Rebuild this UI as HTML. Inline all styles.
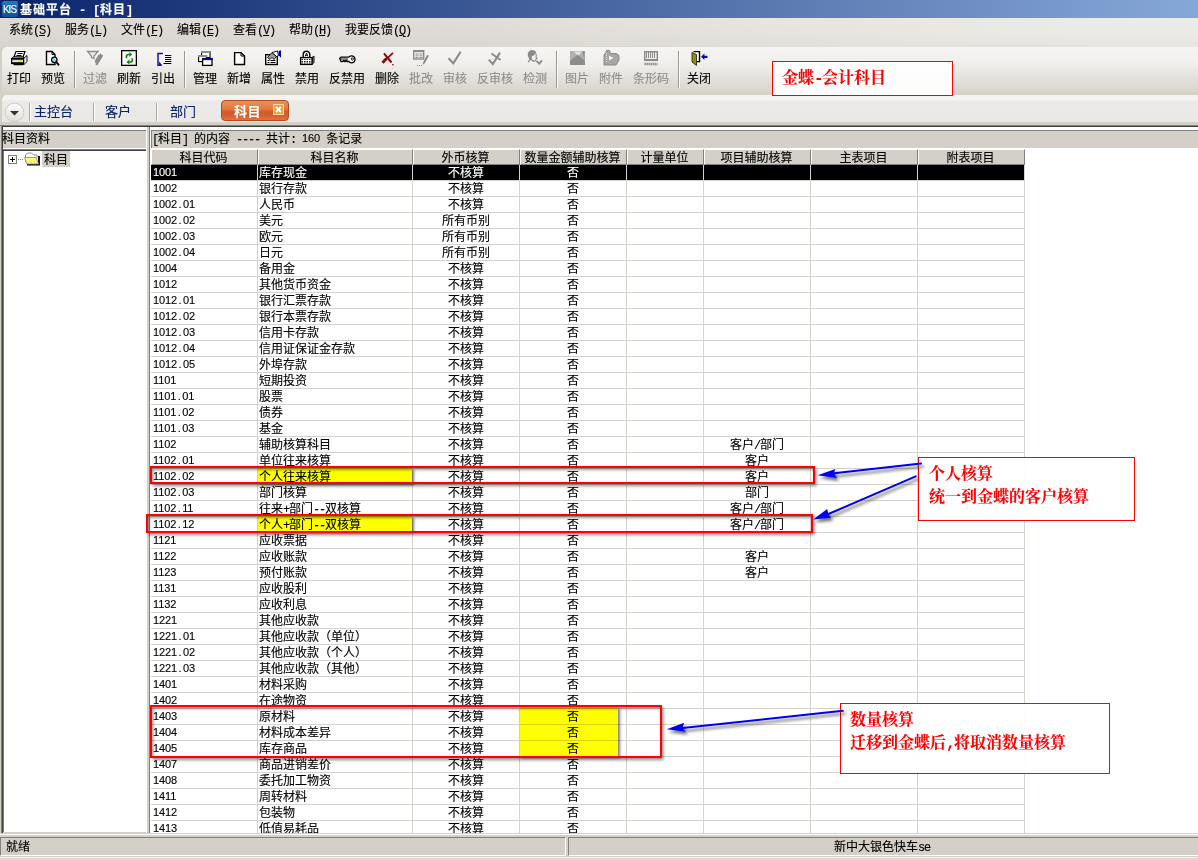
<!DOCTYPE html>
<html lang="zh-CN">
<head>
<meta charset="utf-8">
<title>基础平台 - [科目]</title>
<style>
*{box-sizing:border-box;margin:0;padding:0}
html,body{width:1198px;height:860px;overflow:hidden;background:#d4d0c8}
body{will-change:transform;-webkit-text-stroke:0.12px}
body{position:relative;font-family:"Liberation Sans","Noto Sans CJK SC",sans-serif;font-size:12px;line-height:16px;color:#000}
.l{font-family:"Liberation Mono","Noto Sans CJK SC",monospace;letter-spacing:-1.2px}
.n{font-family:"Liberation Sans",sans-serif;font-size:11px;letter-spacing:-0.120px;position:relative;top:-1px}
.n i{display:inline-block;width:6px;text-align:center;font-style:normal;letter-spacing:0}
.lb{font-family:"Liberation Mono","Noto Sans CJK SC",monospace;letter-spacing:-0.2px}
.abs{position:absolute}
/* title */
#title{position:absolute;left:0;top:0;width:1198px;height:18px;background:linear-gradient(90deg,#0a246a 0%,#86a8d8 100%)}
#title .kis{position:absolute;left:2px;top:1px;width:16px;height:16px;border-radius:2px;background:linear-gradient(180deg,#2278be,#0e5298);color:#fff;font-size:10px;line-height:17px;text-align:center;letter-spacing:-1px;text-indent:-1px;font-family:"Liberation Sans",sans-serif}
#title .t{position:absolute;left:20px;top:2px;color:#fff;font-weight:bold;font-size:12px;line-height:16px;letter-spacing:1px;white-space:pre}
/* menu */
#menu{position:absolute;left:0;top:18px;width:1198px;height:29px;background:linear-gradient(180deg,rgba(255,255,255,.06) 0%,rgba(255,255,255,0) 50%,rgba(0,0,0,.025) 100%),linear-gradient(90deg,#dcd9d2 0%,#dedbd5 38%,#e6e4de 65%,#eceae6 92%)}
#menu span.m{position:absolute;top:4px;white-space:pre;line-height:16px}
#menu u{text-decoration:underline}
/* toolbar */
#tb{position:absolute;left:2px;top:47px;width:1196px;height:47px;border-radius:5px 0 0 0;background:linear-gradient(180deg,#f6f5f3 0%,#f0efec 35%,#e2e0da 70%,#d5d2c9 100%)}
.b{position:absolute;top:0;height:47px;text-align:center}
.b svg{position:absolute;top:3px;left:50%;margin-left:-7px;width:17px;height:16px;overflow:visible}
.b span{position:absolute;left:1px;right:-1px;top:24px;line-height:16px;white-space:nowrap}
.b.d span{color:#8e8e8e}
.sep{position:absolute;top:4px;width:2px;height:37px;border-left:1px solid #9a9890;border-right:1px solid #fdfdfc}
/* tab bar */
#tabs{position:absolute;left:2px;top:95px;width:1196px;height:27px;border-radius:5px 0 0 0;background:linear-gradient(180deg,#f5f4f2 0,#f4f3f1 5px,#ebeae8 6px,#e9e8e5 100%)}
#tabs .tl{position:absolute;top:9px;color:#0a246a;font-size:13px;line-height:16px;white-space:nowrap}
#tabs .ts{position:absolute;top:8px;width:2px;height:18px;border-left:1px solid #aaa79e;border-right:1px solid #fff}
/* panes */
.hdr{position:absolute;height:18px;background:#d4d0c8;border-top:1px solid #808080;line-height:16px;padding-top:0px;white-space:pre}
/* table */
#grid{position:absolute;left:151px;top:149px;width:874px;height:684px;overflow:hidden}
.h{display:flex;height:16px;background:#d4d0c8}
.h div{height:16px;border-right:1px solid #808080;border-bottom:1px solid #808080;border-left:1px solid #fff;border-top:1px solid #fff;text-align:center;line-height:17px;padding-right:2px;white-space:nowrap;overflow:hidden}
.r{display:flex;height:16px}
.r.sel{background:#000;color:#fff}
.c{height:16px;border-right:1px solid #d5d2cb;border-bottom:1px solid #d5d2cb;line-height:17px;white-space:nowrap;overflow:hidden;text-align:center}

.c1{width:107px;text-align:left;padding-left:2px}
.c2{width:155px;text-align:left;padding-left:1px}
.c3,.c4,.c6,.c7,.c8{width:107px}
.c5{width:77px}
/* annotations */
.note{position:absolute;background:rgba(255,255,255,.93);border:1px solid #f00;color:#f00;font-weight:bold;font-size:16px;line-height:22.500px;font-family:"Liberation Serif","Noto Serif CJK SC",serif;white-space:nowrap}
.nl{font-family:"Liberation Mono",monospace;letter-spacing:-1.600px}
.rr{position:absolute;border:2px solid #ff0000;box-shadow:1.500px 2px 3px rgba(0,0,0,.45),inset 1.500px 2px 3px rgba(0,0,0,.4)}
.yl{position:absolute;background:#ffff00;box-shadow:1.500px 2px 2.500px rgba(0,0,0,.5);mix-blend-mode:multiply}
/* status */
#status{position:absolute;left:0;top:833px;width:1198px;height:27px;background:#d4d0c8}
</style>
</head>
<body>
<div id="title"><div class="kis">KIS</div><div class="t">基础平台<span class="lb"> - [</span>科目<span class="lb">]</span></div></div>

<div id="menu">
<span class="m" style="left:9px">系统<span class="l">(<u>S</u>)</span></span>
<span class="m" style="left:65px">服务<span class="l">(<u>L</u>)</span></span>
<span class="m" style="left:121px">文件<span class="l">(<u>F</u>)</span></span>
<span class="m" style="left:177px">编辑<span class="l">(<u>E</u>)</span></span>
<span class="m" style="left:233px">查看<span class="l">(<u>V</u>)</span></span>
<span class="m" style="left:289px">帮助<span class="l">(<u>H</u>)</span></span>
<span class="m" style="left:345px">我要反馈<span class="l">(<u>Q</u>)</span></span>
</div>

<div id="tb">
<div class="b" style="left:-1px;width:34px"><svg viewBox="0 0 17 16"><path d="M5 1.500h9l-2 5.500h-9z" fill="#fff" stroke="#000" stroke-width="1.200"/><path d="M6.500 3.500h5M5.500 5.500h5" stroke="#000"/><path d="M12.500 8.500l3.500-3v6l-3.500 3.500z" fill="#e4e4e4" stroke="#000" stroke-width="0.900"/><path d="M0.600 8.500l2-1.500h10l-0.100 1.500" fill="#fff" stroke="#000"/><rect x="0.600" y="8.500" width="12" height="5" fill="#fff" stroke="#000" stroke-width="1.200"/><path d="M1 9.700h11M1 12.400h11" stroke="#000" stroke-width="0.900"/><rect x="7" y="10.300" width="3.300" height="1.700" fill="#f0e000"/><path d="M2.500 14.600h9.500" stroke="#000" stroke-width="1.300"/></svg><span>打印</span></div>
<div class="b" style="left:33px;width:34px"><svg viewBox="0 0 17 16"><path d="M1.500 1.500h5.500l3 3v10h-8.500z" fill="#fff" stroke="#000" stroke-width="1.400"/><path d="M7 1.500v3h3" fill="none" stroke="#000"/><circle cx="9.300" cy="9.800" r="2.700" fill="#d8f4f8" stroke="#000" stroke-width="1.300"/><circle cx="9" cy="9.300" r="1" fill="#20d8f0"/><circle cx="10.200" cy="10.600" r="0.800" fill="#20d8f0"/><path d="M11.300 12l2.700 3.400" stroke="#000" stroke-width="1.900"/></svg><span>预览</span></div>
<div class="sep" style="left:72px"></div>
<div class="b d" style="left:75px;width:34px"><svg viewBox="0 0 17 16"><path d="M0.500 1.500h10.500l-4 4.500v2.500l-2.500-1v-1.500z" fill="#f0efec" stroke="#8a8a8a" stroke-width="1.300"/><path d="M15.300 5l-6 10M12.800 4.800l-4.300 7" stroke="#8a8a8a" stroke-width="2.200"/><path d="M14 4l-5.500 9" stroke="#8a8a8a" stroke-width="1.500"/></svg><span>过滤</span></div>
<div class="b" style="left:109px;width:34px"><svg viewBox="0 0 17 16"><rect x="0.650" y="0.650" width="14.700" height="14.700" fill="#fff" stroke="#000" stroke-width="1.300"/><path d="M9 4.500h-1.500a2 2 0 0 0-2 2v1.800" fill="none" stroke="#0a8c0a" stroke-width="1.700"/><path d="M8.300 2l3 2.500-3 2.500z" fill="#0a8c0a"/><path d="M7.500 12h1.800a2 2 0 0 0 2-2v-1.800" fill="none" stroke="#0a8c0a" stroke-width="1.700"/><path d="M8.400 9.500l-3 2.500 3 2.500z" fill="#0a8c0a"/></svg><span>刷新</span></div>
<div class="b" style="left:143px;width:34px"><svg viewBox="0 0 17 16"><path d="M8 3.600h-5v11.600h3.500" fill="none" stroke="#1414b4" stroke-width="1.500"/><path d="M4 11.500l3.200 3.700h-3.200z" fill="#1414b4"/><path d="M10 5.500h6.300M10 7.500h6.300M10 9.500h6.300M10 11.500h6.300M8.500 13.500h7.800" stroke="#000" stroke-width="1.100"/></svg><span>引出</span></div>
<div class="sep" style="left:182px"></div>
<div class="b" style="left:185px;width:34px"><svg viewBox="0 0 17 16"><rect x="4.600" y="1.600" width="8.400" height="6" fill="#fff" stroke="#000" stroke-width="1.100"/><path d="M4 2h9.600" stroke="#8c8c8c" stroke-width="2"/><rect x="1.600" y="5.600" width="8" height="6" fill="#fff" stroke="#000" stroke-width="1.100"/><path d="M1 6h9" stroke="#8c8c8c" stroke-width="2"/><rect x="5.600" y="8.600" width="9.400" height="6.800" fill="#fff" stroke="#000" stroke-width="1.300"/><path d="M5 9h10.600" stroke="#000080" stroke-width="2.200"/></svg><span>管理</span></div>
<div class="b" style="left:219px;width:34px"><svg viewBox="0 0 17 16"><path d="M3.600 2.600h6.400l3.500 3.400v8.500h-9.900z" fill="#fff" stroke="#000" stroke-width="1.400"/><path d="M10 2.600v3.400h3.500" fill="none" stroke="#000"/></svg><span>新增</span></div>
<div class="b" style="left:253px;width:34px"><svg viewBox="0 0 17 16"><rect x="0.700" y="4.700" width="11.600" height="9.800" fill="#fff" stroke="#000" stroke-width="1.400"/><path d="M2.500 10.500h2M5.500 10.500h5M2.500 12.500h2M5.500 12.500h5" stroke="#000" stroke-width="1.100"/><path d="M2.500 7.500l4.500-5 4.500 4-2.500 3-2-2-2 2z" fill="#9c9c9c" stroke="#000" stroke-width="0.900"/><path d="M7 2.500l5.500-1.500 1 4.500-2 1z" fill="#fff" stroke="#000" stroke-width="0.900"/><path d="M13.600 1l2.400-.800v7.500l-2.400-2.500z" fill="#0000a0"/></svg><span>属性</span></div>
<div class="b" style="left:287px;width:34px"><svg viewBox="0 0 17 16"><path d="M4.200 7v-2.500a3 3 0 0 1 6.600 0v2.500" fill="#fff" stroke="#000" stroke-width="1.400"/><path d="M6.200 6.500l1.300-3.500 1.300 3.500M6.700 5.300h1.700" stroke="#000" stroke-width="0.900" fill="none"/><path d="M13 7.500l2-1.500v6.500l-2 2z" fill="#888" stroke="#000" stroke-width="0.900"/><rect x="1.600" y="7.600" width="11.400" height="6.800" fill="#fff" stroke="#000" stroke-width="1.300"/><path d="M2.500 9.500h10M2.500 11.500h10M2.500 13h10" stroke="#000" stroke-width="0.900" stroke-dasharray="1.500 1"/></svg><span>禁用</span></div>
<div class="b" style="left:321px;width:46px"><svg viewBox="0 0 17 16"><path d="M0.700 8.500l1.300-1.300h7.800a3.500 3.500 0 1 1 0 4.300h-1.300l-0.800-1-0.800 1-0.800-1-0.800 1-0.800-1-0.800 1h-1.700z" fill="#fff" stroke="#000" stroke-width="1.300"/><path d="M1.500 9h7.500" stroke="#000" stroke-width="0.900"/><circle cx="13.400" cy="9" r="1.100" fill="#fff" stroke="#000" stroke-width="0.900"/></svg><span>反禁用</span></div>
<div class="b" style="left:367px;width:34px"><svg viewBox="0 0 17 16"><path d="M5 3.300l7.500 9.200" stroke="#8c0a0a" stroke-width="2" fill="none"/><path d="M14 2.800l-7 6.500" stroke="#8c0a0a" stroke-width="1.800" fill="none"/><path d="M7.500 8.500l-4 4.200" stroke="#8c0a0a" stroke-width="3" fill="none"/><rect x="13.200" y="14" width="1.400" height="1.400" fill="#8c0a0a"/></svg><span>删除</span></div>
<div class="b d" style="left:401px;width:34px"><svg viewBox="0 0 17 16"><rect x="0.700" y="0.700" width="10" height="8.300" fill="#f0efec" stroke="#8a8a8a" stroke-width="1.400"/><path d="M0.700 1.300h10" stroke="#8a8a8a" stroke-width="1.600"/><path d="M2.500 4h3M6.500 4h3M2.500 5.800h3M6.500 5.800h3M2.500 7.500h3M6.500 7.500h3" stroke="#8a8a8a" stroke-width="0.900"/><path d="M16 5.500l-2-.500-3.500 6.500-1 3.500 2.500-2z" fill="#8a8a8a"/><path d="M4 15.500h5" stroke="#8a8a8a" stroke-dasharray="1 1"/></svg><span>批改</span></div>
<div class="b d" style="left:435px;width:34px"><svg viewBox="0 0 17 16"><path d="M1.500 8.300l4.800 5 7.300-11.600" fill="none" stroke="#8a8a8a" stroke-width="2.100"/></svg><span>审核</span></div>
<div class="b d" style="left:469px;width:46px"><svg viewBox="0 0 17 16"><path d="M1.800 9.600l4 4.400 7.200-11.400" fill="none" stroke="#8a8a8a" stroke-width="2.100"/><path d="M4.400 3.500l9.200 6.500" stroke="#8a8a8a" stroke-width="1.700"/></svg><span>反审核</span></div>
<div class="b d" style="left:515px;width:34px"><svg viewBox="0 0 17 16"><path d="M1 6a4.500 4.500 0 0 1 8.500-3l-1.500 .5-1 2-2 .5-.5 3-2 1z" fill="#8a8a8a"/><path d="M8.500 3.500c1 1 1 2.500 .5 3.500l1 1.500-1 .5c0 1.500-1 2.500-3 2" fill="none" stroke="#8a8a8a" stroke-width="1.100"/><path d="M1 12l3-3 2.500 2.500" fill="none" stroke="#8a8a8a" stroke-width="1.100"/><path d="M9.400 10.900l2.800 2.700 2.800-3.200" fill="none" stroke="#8a8a8a" stroke-width="1.800"/></svg><span>检测</span></div>
<div class="sep" style="left:554px"></div>
<div class="b d" style="left:557px;width:34px"><svg viewBox="0 0 17 16"><rect x="1" y="1" width="15" height="14" fill="#b0b0b0"/><path d="M5 1.500h8l-4 5z" fill="#e4e4e2"/><path d="M1 11l7.500-6.500 7.500 6.500v4h-15z" fill="#8c8c8c"/><path d="M13.500 1.500h2v9z" fill="#8c8c8c"/></svg><span>图片</span></div>
<div class="b d" style="left:591px;width:34px"><svg viewBox="0 0 17 16"><path d="M1 4.500l2-1.500v-2l2-1 2 1v2.500h6.500l2.500 2v4.500l-3 5h-12z" fill="#a6a6a6" stroke="#8a8a8a"/><path d="M6 5.500l4.500 2.500-4.500 2.500z" fill="#f0efec"/><path d="M3.500 3v9" stroke="#e4e4e2" stroke-dasharray="1 1"/></svg><span>附件</span></div>
<div class="b d" style="left:625px;width:46px"><svg viewBox="0 0 17 16"><rect x="1.700" y="1.700" width="12.600" height="8" fill="#f0efec" stroke="#8a8a8a" stroke-width="1.400"/><path d="M3.500 2v6M5.500 2v6M7.500 2v6M9.500 2v6M11.500 2v6" stroke="#8a8a8a" stroke-width="1"/><path d="M1 10h14" stroke="#8a8a8a" stroke-width="2"/><path d="M1.500 14h13" stroke="#8a8a8a" stroke-width="2.400" stroke-dasharray="1.400 0.600"/></svg><span>条形码</span></div>
<div class="sep" style="left:676px"></div>
<div class="b" style="left:679px;width:34px"><svg viewBox="0 0 17 16"><path d="M2.500 1.600h6v10h-3" fill="#fff" stroke="#000" stroke-width="1.400"/><path d="M1 2.500l4.500 2v11l-4.500-3.500z" fill="#8c8c1c" stroke="#303008" stroke-width="0.900"/><path d="M16.400 5.700h-3v-2.200l-3.400 3.300 3.400 3.300v-2.200h3z" fill="#0a0ab4"/></svg><span>关闭</span></div>
</div>

<div id="tabs">
<svg class="abs" style="left:2px;top:7px" width="21" height="21" viewBox="0 0 21 21"><defs><linearGradient id="cg" x1="0" y1="0" x2="0" y2="1"><stop offset="0" stop-color="#fdfdfc"/><stop offset="1" stop-color="#dedcd6"/></linearGradient></defs><circle cx="10.500" cy="10.500" r="9.300" fill="url(#cg)" stroke="#cfcdc6" stroke-width="1"/><path d="M6 9h9l-4.5 4.5z" fill="#333"/></svg>
<div class="ts" style="left:27px"></div>
<div class="tl" style="left:32px">主控台</div>
<div class="ts" style="left:91px"></div>
<div class="tl" style="left:103px">客户</div>
<div class="ts" style="left:154px"></div>
<div class="tl" style="left:168px">部门</div>
<div class="abs" style="left:219px;top:5px;width:68px;height:21px;border-radius:4px;border:1px solid #b44a1e;background:linear-gradient(180deg,#ea9058 0%,#e27a42 40%,#d05a2a 58%,#d4602e 75%,#e27238 100%)">
<span class="abs" style="left:12px;top:3px;color:#fff;font-weight:bold;font-size:13px;line-height:16px;letter-spacing:0.5px;white-space:nowrap">科目</span>
<svg class="abs" style="left:51px;top:3px" width="11" height="11" viewBox="0 0 11 11"><rect x="0.5" y="0.5" width="10" height="10" fill="#f0a234" stroke="#f9d9a4"/><path d="M3 3l5 5M8 3l-5 5" stroke="#fff" stroke-width="1.8"/></svg>
</div>
</div>
<div class="abs" style="left:0;top:122px;width:1198px;height:3px;background:#d4d0c8"></div>
<div class="abs" style="left:0;top:125px;width:1198px;height:1px;background:#808080"></div>
<div class="abs" style="left:1px;top:126px;width:1197px;height:1px;background:#404040"></div>

<!-- left pane -->
<div class="abs" style="left:1px;top:126px;width:1px;height:707px;background:#808080"></div>
<div class="abs" style="left:2px;top:126px;width:1px;height:707px;background:#404040"></div>
<div class="abs" style="left:3px;top:127px;width:144px;height:3px;background:#fff"></div>
<div class="hdr" style="left:3px;top:130px;width:143px;text-indent:-1px">科目资料</div>
<div class="abs" style="left:146px;top:127px;width:1px;height:706px;background:#fff"></div>
<div class="abs" style="left:3px;top:148px;width:143px;height:1px;background:#fff"></div>
<div class="abs" style="left:3px;top:149px;width:143px;height:1px;background:#808080"></div>
<div class="abs" style="left:3px;top:150px;width:143px;height:1px;background:#404040"></div>
<div class="abs" style="left:3px;top:151px;width:143px;height:681px;background:#fff;border-left:1px solid #808080"></div>
<svg class="abs" style="left:8px;top:155px" width="16" height="9" viewBox="0 0 16 9"><rect x="0.5" y="0.5" width="8" height="8" fill="#fff" stroke="#808080"/><path d="M2 4.5h5M4.5 2v5" stroke="#000"/><path d="M10 4.5h5" stroke="#808080" stroke-dasharray="1 1"/></svg>
<svg class="abs" style="left:24px;top:152px" width="16" height="14" viewBox="0 0 16 14"><path d="M1.500 10v-7l2-2h4l2 2h3.500v3" fill="#fff" stroke="#8c8c8c"/><path d="M3 12.500h12v-8.500" fill="none" stroke="#000" stroke-width="1.800"/><path d="M0.500 5.500h11.500l2.500 6.500h-11.500z" fill="#f6f47a" stroke="#8c8c8c" stroke-width="0.800"/></svg>
<div class="abs" style="left:42px;top:151px;width:28px;height:16px;background:#d4d0c8;padding-left:2px;line-height:18px">科目</div>

<!-- splitter -->
<div class="abs" style="left:147px;top:127px;width:2px;height:706px;background:#d4d0c8"></div>
<div class="abs" style="left:149px;top:127px;width:1px;height:706px;background:#808080"></div>

<!-- right pane -->
<div class="abs" style="left:150px;top:127px;width:1048px;height:706px;background:#fff"></div>
<div class="hdr" style="left:151px;top:130px;width:1047px;border-left:1px solid #808080;padding-left:0px"><span class="l">[</span>科目<span class="l">] </span>的内容<span class="l"> ---- </span>共计<span class="l">: </span><span class="n">160</span><span class="l"> </span>条记录</div>
<div id="grid">
<div class="h"><div style="width:107px">科目代码</div><div style="width:155px">科目名称</div><div style="width:107px">外币核算</div><div style="width:107px">数量金额辅助核算</div><div style="width:77px">计量单位</div><div style="width:107px">项目辅助核算</div><div style="width:107px">主表项目</div><div style="width:107px">附表项目</div></div>
<div class="r sel"><div class="c c1"><span class="n">1001</span></div><div class="c c2">库存现金</div><div class="c c3">不核算</div><div class="c c4">否</div><div class="c c5"></div><div class="c c6"></div><div class="c c7"></div><div class="c c8"></div></div>
<div class="r"><div class="c c1"><span class="n">1002</span></div><div class="c c2">银行存款</div><div class="c c3">不核算</div><div class="c c4">否</div><div class="c c5"></div><div class="c c6"></div><div class="c c7"></div><div class="c c8"></div></div>
<div class="r"><div class="c c1"><span class="n">1002<i>.</i>01</span></div><div class="c c2">人民币</div><div class="c c3">不核算</div><div class="c c4">否</div><div class="c c5"></div><div class="c c6"></div><div class="c c7"></div><div class="c c8"></div></div>
<div class="r"><div class="c c1"><span class="n">1002<i>.</i>02</span></div><div class="c c2">美元</div><div class="c c3">所有币别</div><div class="c c4">否</div><div class="c c5"></div><div class="c c6"></div><div class="c c7"></div><div class="c c8"></div></div>
<div class="r"><div class="c c1"><span class="n">1002<i>.</i>03</span></div><div class="c c2">欧元</div><div class="c c3">所有币别</div><div class="c c4">否</div><div class="c c5"></div><div class="c c6"></div><div class="c c7"></div><div class="c c8"></div></div>
<div class="r"><div class="c c1"><span class="n">1002<i>.</i>04</span></div><div class="c c2">日元</div><div class="c c3">所有币别</div><div class="c c4">否</div><div class="c c5"></div><div class="c c6"></div><div class="c c7"></div><div class="c c8"></div></div>
<div class="r"><div class="c c1"><span class="n">1004</span></div><div class="c c2">备用金</div><div class="c c3">不核算</div><div class="c c4">否</div><div class="c c5"></div><div class="c c6"></div><div class="c c7"></div><div class="c c8"></div></div>
<div class="r"><div class="c c1"><span class="n">1012</span></div><div class="c c2">其他货币资金</div><div class="c c3">不核算</div><div class="c c4">否</div><div class="c c5"></div><div class="c c6"></div><div class="c c7"></div><div class="c c8"></div></div>
<div class="r"><div class="c c1"><span class="n">1012<i>.</i>01</span></div><div class="c c2">银行汇票存款</div><div class="c c3">不核算</div><div class="c c4">否</div><div class="c c5"></div><div class="c c6"></div><div class="c c7"></div><div class="c c8"></div></div>
<div class="r"><div class="c c1"><span class="n">1012<i>.</i>02</span></div><div class="c c2">银行本票存款</div><div class="c c3">不核算</div><div class="c c4">否</div><div class="c c5"></div><div class="c c6"></div><div class="c c7"></div><div class="c c8"></div></div>
<div class="r"><div class="c c1"><span class="n">1012<i>.</i>03</span></div><div class="c c2">信用卡存款</div><div class="c c3">不核算</div><div class="c c4">否</div><div class="c c5"></div><div class="c c6"></div><div class="c c7"></div><div class="c c8"></div></div>
<div class="r"><div class="c c1"><span class="n">1012<i>.</i>04</span></div><div class="c c2">信用证保证金存款</div><div class="c c3">不核算</div><div class="c c4">否</div><div class="c c5"></div><div class="c c6"></div><div class="c c7"></div><div class="c c8"></div></div>
<div class="r"><div class="c c1"><span class="n">1012<i>.</i>05</span></div><div class="c c2">外埠存款</div><div class="c c3">不核算</div><div class="c c4">否</div><div class="c c5"></div><div class="c c6"></div><div class="c c7"></div><div class="c c8"></div></div>
<div class="r"><div class="c c1"><span class="n">1101</span></div><div class="c c2">短期投资</div><div class="c c3">不核算</div><div class="c c4">否</div><div class="c c5"></div><div class="c c6"></div><div class="c c7"></div><div class="c c8"></div></div>
<div class="r"><div class="c c1"><span class="n">1101<i>.</i>01</span></div><div class="c c2">股票</div><div class="c c3">不核算</div><div class="c c4">否</div><div class="c c5"></div><div class="c c6"></div><div class="c c7"></div><div class="c c8"></div></div>
<div class="r"><div class="c c1"><span class="n">1101<i>.</i>02</span></div><div class="c c2">债券</div><div class="c c3">不核算</div><div class="c c4">否</div><div class="c c5"></div><div class="c c6"></div><div class="c c7"></div><div class="c c8"></div></div>
<div class="r"><div class="c c1"><span class="n">1101<i>.</i>03</span></div><div class="c c2">基金</div><div class="c c3">不核算</div><div class="c c4">否</div><div class="c c5"></div><div class="c c6"></div><div class="c c7"></div><div class="c c8"></div></div>
<div class="r"><div class="c c1"><span class="n">1102</span></div><div class="c c2">辅助核算科目</div><div class="c c3">不核算</div><div class="c c4">否</div><div class="c c5"></div><div class="c c6">客户<span class="l">/</span>部门</div><div class="c c7"></div><div class="c c8"></div></div>
<div class="r"><div class="c c1"><span class="n">1102<i>.</i>01</span></div><div class="c c2">单位往来核算</div><div class="c c3">不核算</div><div class="c c4">否</div><div class="c c5"></div><div class="c c6">客户</div><div class="c c7"></div><div class="c c8"></div></div>
<div class="r"><div class="c c1"><span class="n">1102<i>.</i>02</span></div><div class="c c2">个人往来核算</div><div class="c c3">不核算</div><div class="c c4">否</div><div class="c c5"></div><div class="c c6">客户</div><div class="c c7"></div><div class="c c8"></div></div>
<div class="r"><div class="c c1"><span class="n">1102<i>.</i>03</span></div><div class="c c2">部门核算</div><div class="c c3">不核算</div><div class="c c4">否</div><div class="c c5"></div><div class="c c6">部门</div><div class="c c7"></div><div class="c c8"></div></div>
<div class="r"><div class="c c1"><span class="n">1102<i>.</i>11</span></div><div class="c c2">往来<span class="l">+</span>部门<span class="l">--</span>双核算</div><div class="c c3">不核算</div><div class="c c4">否</div><div class="c c5"></div><div class="c c6">客户<span class="l">/</span>部门</div><div class="c c7"></div><div class="c c8"></div></div>
<div class="r"><div class="c c1"><span class="n">1102<i>.</i>12</span></div><div class="c c2">个人<span class="l">+</span>部门<span class="l">--</span>双核算</div><div class="c c3">不核算</div><div class="c c4">否</div><div class="c c5"></div><div class="c c6">客户<span class="l">/</span>部门</div><div class="c c7"></div><div class="c c8"></div></div>
<div class="r"><div class="c c1"><span class="n">1121</span></div><div class="c c2">应收票据</div><div class="c c3">不核算</div><div class="c c4">否</div><div class="c c5"></div><div class="c c6"></div><div class="c c7"></div><div class="c c8"></div></div>
<div class="r"><div class="c c1"><span class="n">1122</span></div><div class="c c2">应收账款</div><div class="c c3">不核算</div><div class="c c4">否</div><div class="c c5"></div><div class="c c6">客户</div><div class="c c7"></div><div class="c c8"></div></div>
<div class="r"><div class="c c1"><span class="n">1123</span></div><div class="c c2">预付账款</div><div class="c c3">不核算</div><div class="c c4">否</div><div class="c c5"></div><div class="c c6">客户</div><div class="c c7"></div><div class="c c8"></div></div>
<div class="r"><div class="c c1"><span class="n">1131</span></div><div class="c c2">应收股利</div><div class="c c3">不核算</div><div class="c c4">否</div><div class="c c5"></div><div class="c c6"></div><div class="c c7"></div><div class="c c8"></div></div>
<div class="r"><div class="c c1"><span class="n">1132</span></div><div class="c c2">应收利息</div><div class="c c3">不核算</div><div class="c c4">否</div><div class="c c5"></div><div class="c c6"></div><div class="c c7"></div><div class="c c8"></div></div>
<div class="r"><div class="c c1"><span class="n">1221</span></div><div class="c c2">其他应收款</div><div class="c c3">不核算</div><div class="c c4">否</div><div class="c c5"></div><div class="c c6"></div><div class="c c7"></div><div class="c c8"></div></div>
<div class="r"><div class="c c1"><span class="n">1221<i>.</i>01</span></div><div class="c c2">其他应收款（单位）</div><div class="c c3">不核算</div><div class="c c4">否</div><div class="c c5"></div><div class="c c6"></div><div class="c c7"></div><div class="c c8"></div></div>
<div class="r"><div class="c c1"><span class="n">1221<i>.</i>02</span></div><div class="c c2">其他应收款（个人）</div><div class="c c3">不核算</div><div class="c c4">否</div><div class="c c5"></div><div class="c c6"></div><div class="c c7"></div><div class="c c8"></div></div>
<div class="r"><div class="c c1"><span class="n">1221<i>.</i>03</span></div><div class="c c2">其他应收款（其他）</div><div class="c c3">不核算</div><div class="c c4">否</div><div class="c c5"></div><div class="c c6"></div><div class="c c7"></div><div class="c c8"></div></div>
<div class="r"><div class="c c1"><span class="n">1401</span></div><div class="c c2">材料采购</div><div class="c c3">不核算</div><div class="c c4">否</div><div class="c c5"></div><div class="c c6"></div><div class="c c7"></div><div class="c c8"></div></div>
<div class="r"><div class="c c1"><span class="n">1402</span></div><div class="c c2">在途物资</div><div class="c c3">不核算</div><div class="c c4">否</div><div class="c c5"></div><div class="c c6"></div><div class="c c7"></div><div class="c c8"></div></div>
<div class="r"><div class="c c1"><span class="n">1403</span></div><div class="c c2">原材料</div><div class="c c3">不核算</div><div class="c c4">否</div><div class="c c5"></div><div class="c c6"></div><div class="c c7"></div><div class="c c8"></div></div>
<div class="r"><div class="c c1"><span class="n">1404</span></div><div class="c c2">材料成本差异</div><div class="c c3">不核算</div><div class="c c4">否</div><div class="c c5"></div><div class="c c6"></div><div class="c c7"></div><div class="c c8"></div></div>
<div class="r"><div class="c c1"><span class="n">1405</span></div><div class="c c2">库存商品</div><div class="c c3">不核算</div><div class="c c4">否</div><div class="c c5"></div><div class="c c6"></div><div class="c c7"></div><div class="c c8"></div></div>
<div class="r"><div class="c c1"><span class="n">1407</span></div><div class="c c2">商品进销差价</div><div class="c c3">不核算</div><div class="c c4">否</div><div class="c c5"></div><div class="c c6"></div><div class="c c7"></div><div class="c c8"></div></div>
<div class="r"><div class="c c1"><span class="n">1408</span></div><div class="c c2">委托加工物资</div><div class="c c3">不核算</div><div class="c c4">否</div><div class="c c5"></div><div class="c c6"></div><div class="c c7"></div><div class="c c8"></div></div>
<div class="r"><div class="c c1"><span class="n">1411</span></div><div class="c c2">周转材料</div><div class="c c3">不核算</div><div class="c c4">否</div><div class="c c5"></div><div class="c c6"></div><div class="c c7"></div><div class="c c8"></div></div>
<div class="r"><div class="c c1"><span class="n">1412</span></div><div class="c c2">包装物</div><div class="c c3">不核算</div><div class="c c4">否</div><div class="c c5"></div><div class="c c6"></div><div class="c c7"></div><div class="c c8"></div></div>
<div class="r"><div class="c c1"><span class="n">1413</span></div><div class="c c2">低值易耗品</div><div class="c c3">不核算</div><div class="c c4">否</div><div class="c c5"></div><div class="c c6"></div><div class="c c7"></div><div class="c c8"></div></div>
</div>

<!-- highlights -->
<div class="yl" style="left:258px;top:468px;width:154px;height:15px"></div>
<div class="yl" style="left:258px;top:516px;width:154px;height:15px"></div>
<div class="yl" style="left:520px;top:707px;width:98px;height:49px"></div>
<!--OVERTEXT-->
<div class="rr" style="left:150px;top:466px;width:665px;height:18px"></div>
<div class="rr" style="left:146px;top:514px;width:667px;height:19px"></div>
<div class="rr" style="left:150px;top:705px;width:512px;height:53px"></div>



<div class="note" style="left:772px;top:61px;width:181px;height:35px;padding:5px 0 0 9px">金蝶<span class="nl">-</span>会计科目</div>
<div class="note" style="left:918px;top:457px;width:217px;height:64px;padding:5px 0 0 10px">个人核算<br>统一到金蝶的客户核算</div>
<div class="note" style="left:840px;top:703px;width:270px;height:71px;padding:5px 0 0 9px">数量核算<br>迁移到金蝶后<span class="nl">,</span>将取消数量核算</div>

<svg class="abs" style="left:0;top:0;pointer-events:none" width="1198" height="860" viewBox="0 0 1198 860">
<defs><filter id="sh" x="-10%" y="-30%" width="120%" height="170%"><feGaussianBlur in="SourceAlpha" stdDeviation="1.500"/><feOffset dx="2" dy="2.500"/><feComponentTransfer><feFuncA type="linear" slope="0.550"/></feComponentTransfer><feMerge><feMergeNode/><feMergeNode in="SourceGraphic"/></feMerge></filter></defs>
<g filter="url(#sh)" stroke="#0000f0" stroke-width="2" fill="#0000f0" stroke-linecap="round">
<path d="M921 463.600L834 473.300" fill="none"/><path d="M817.500 475.200L835.400 469L833.800 473.300L837 478z" stroke="none"/>
<path d="M915.700 476.300L828.500 514" fill="none"/><path d="M813.100 519.500L827.200 509.100L828.300 514L831 517.800z" stroke="none"/>
<path d="M842.800 710.800L682.500 728" fill="none"/><path d="M666.700 729.200L684.200 722.700L682.400 728L685.900 731.800z" stroke="none"/>
</g>
</svg>

<!-- status -->
<div id="status">
<div class="abs" style="left:0;top:1px;width:1198px;height:1px;background:#fff"></div>
<div class="abs" style="left:0;top:4px;width:566px;height:19px;border-top:1px solid #808080;border-left:1px solid #808080;border-right:1px solid #fff;border-bottom:1px solid #fff;padding:0 0 0 5px;line-height:18px;white-space:nowrap">就绪</div>
<div class="abs" style="left:568px;top:4px;width:630px;height:19px;border-top:1px solid #808080;border-left:1px solid #808080;border-bottom:1px solid #fff;padding:0 3px 0 0;line-height:18px;text-align:center;white-space:nowrap">新中大银色快车<span class="l">se</span></div>
<div class="abs" style="left:0;top:24px;width:1198px;height:1px;background:#f4f3f0"></div>
<div class="abs" style="left:0;top:25px;width:1198px;height:2px;background:#dcd9d2"></div>
</div>
</body>
</html>
